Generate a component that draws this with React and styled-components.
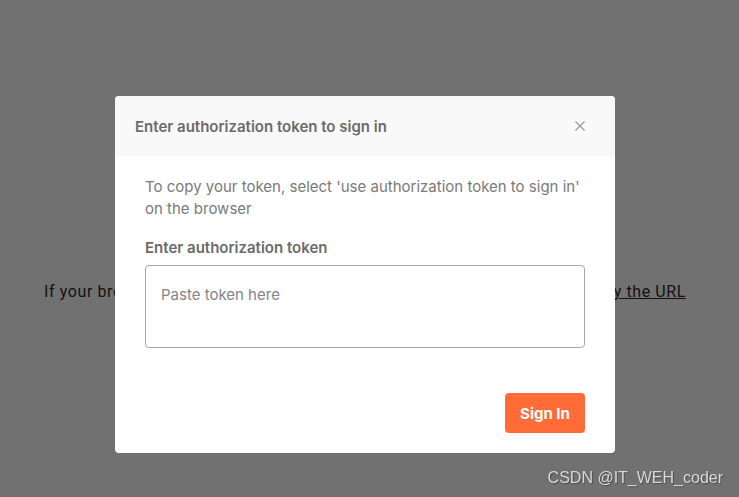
import React from 'react';
import styled, { createGlobalStyle } from 'styled-components';

const Global = createGlobalStyle`
  html, body { margin: 0; padding: 0; }
  body { font-family: Inter, "Noto Sans", sans-serif; background: #fff; }
`;

const Page = styled.div`
  width: 739px;
  height: 497px;
  box-sizing: border-box;
  padding-top: 282px;
  display: flex;
  justify-content: center;
  background: #fff;
`;

const Notice = styled.p`
  margin: 0 0 0 -9px;
  font-family: Roboto, "Liberation Sans", sans-serif;
  font-size: 16px;
  line-height: 20px;
  letter-spacing: 0.6px;
  color: #2b2b2b;
  white-space: nowrap;
  a { color: inherit; text-decoration: underline; }
`;

const Overlay = styled.div`
  position: fixed;
  inset: 0;
  background: rgba(0, 0, 0, 0.555);
  display: flex;
  align-items: flex-start;
  justify-content: center;
  padding-top: 96px;
`;

const Modal = styled.div`
  width: 500px;
  margin-right: 9px;
  background: #fff;
  border-radius: 4px;
  overflow: hidden;
`;

const Header = styled.div`
  height: 60px;
  background: #f9f9f9;
  display: flex;
  align-items: center;
  justify-content: space-between;
  padding: 0 30px 0 20px;
`;

const Title = styled.h2`
  margin: 0;
  font-size: 15px;
  font-weight: 600;
  color: #6b6b6b;
`;

const Close = styled.button`
  border: none;
  background: none;
  padding: 0;
  width: 10px;
  height: 10px;
  display: flex;
  cursor: pointer;
`;

const Body = styled.div`
  padding: 20px 30px 20px;
`;

const Text = styled.p`
  margin: 0;
  font-size: 15px;
  line-height: 22px;
  color: #7a7a7a;
`;

const Label = styled.label`
  display: block;
  margin: 17px 0 6px;
  font-size: 15px;
  font-weight: 600;
  line-height: 22px;
  color: #6b6b6b;
`;

const Area = styled.textarea`
  box-sizing: border-box;
  display: block;
  width: 440px;
  height: 83px;
  border: 1px solid #a6a6a6;
  border-radius: 4px;
  padding: 19px 15px;
  font-family: Inter, sans-serif;
  font-size: 15px;
  resize: none;
  outline: none;
  &::placeholder { color: #858585; }
`;

const Footer = styled.div`
  display: flex;
  justify-content: flex-end;
  margin-top: 45px;
`;

const SignIn = styled.button`
  width: 80px;
  height: 40px;
  border: none;
  border-radius: 4px;
  background: #ff6c37;
  color: #fff;
  font-family: Inter, sans-serif;
  font-size: 15px;
  font-weight: 700;
  cursor: pointer;
`;

const Mark = styled.div`
  position: fixed;
  right: 16px;
  bottom: 10px;
  font-family: "Liberation Sans", Arial, sans-serif;
  font-size: 16px;
  color: #d8d8d8;
  text-shadow: 1px 1px 1px rgba(0, 0, 0, 0.35);
`;

export default function App() {
  return (
    <>
      <Global />
      <Page>
        <Notice>
          If your browser does not open automatically, click the link to sign in or <a href="#">copy the URL</a>
        </Notice>
      </Page>
      <Overlay>
        <Modal>
          <Header>
            <Title>Enter authorization token to sign in</Title>
            <Close aria-label="close">
              <svg width="10" height="10" viewBox="0 0 10 10">
                <path d="M0.5 0.5L9.5 9.5M9.5 0.5L0.5 9.5" stroke="#9a9a9a" strokeWidth="1.2" />
              </svg>
            </Close>
          </Header>
          <Body>
            <Text>To copy your token, select 'use authorization token to sign in' on the browser</Text>
            <Label>Enter authorization token</Label>
            <Area placeholder="Paste token here" />
            <Footer>
              <SignIn>Sign In</SignIn>
            </Footer>
          </Body>
        </Modal>
      </Overlay>
      <Mark>CSDN @IT_WEH_coder</Mark>
    </>
  );
}
